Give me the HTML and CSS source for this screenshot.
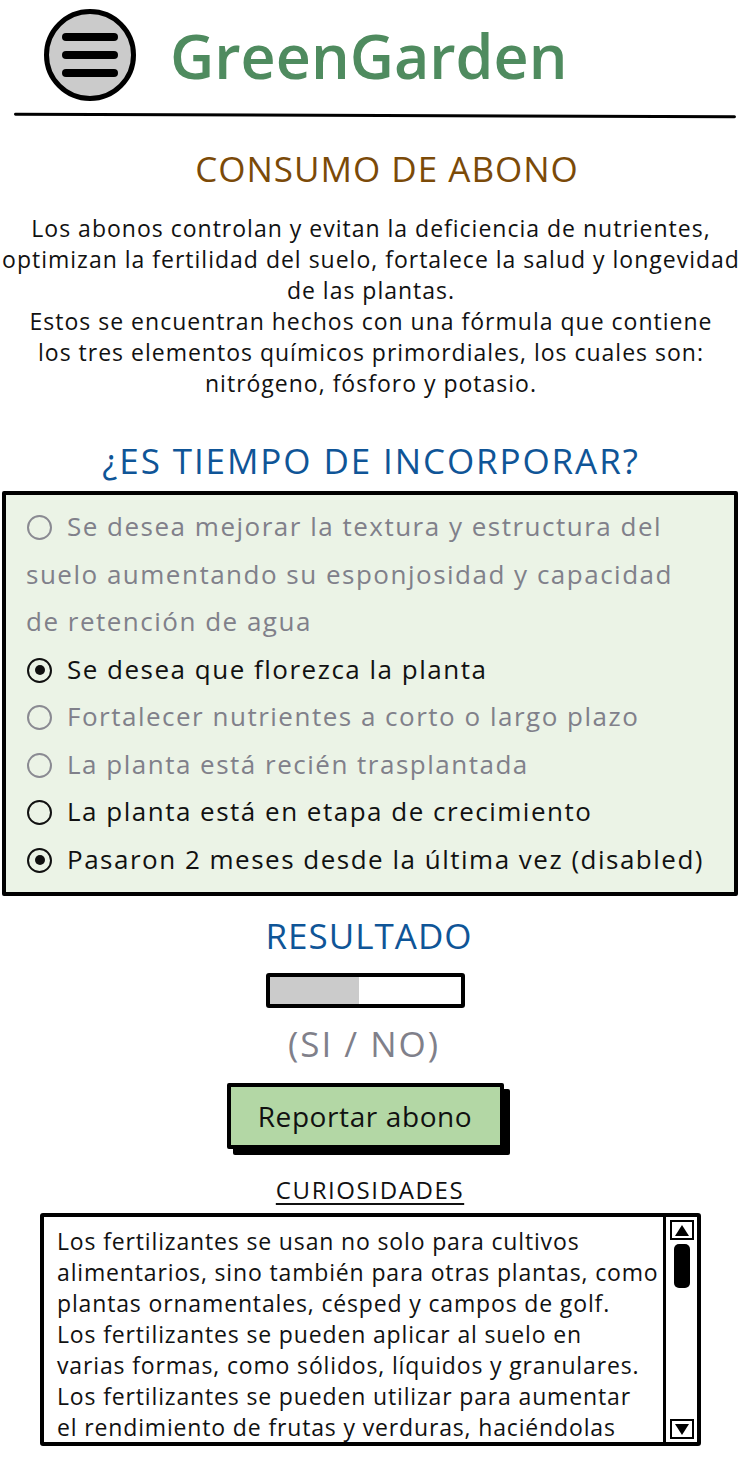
FILE: index.html
```html
<!DOCTYPE html>
<html lang="es">
<head>
<meta charset="utf-8">
<title>GreenGarden</title>
<link rel="stylesheet" href="styles.css">
</head>
<body>
<header class="header">
  <div class="menu-btn">
    <span class="bar"></span><span class="bar"></span><span class="bar"></span>
  </div>
  <h1 class="brand">GreenGarden</h1>
</header>
<div class="rule"></div>

<h2 class="title brown">CONSUMO DE ABONO</h2>
<p class="intro">Los abonos controlan y evitan la deficiencia de nutrientes,<br>optimizan la fertilidad del suelo, fortalece la salud y longevidad<br>de las plantas.<br>Estos se encuentran hechos con una fórmula que contiene<br>los tres elementos químicos primordiales, los cuales son:<br>nitrógeno, fósforo y potasio.</p>

<h2 class="title blue q">¿ES TIEMPO DE INCORPORAR?</h2>
<div class="options">
  <div class="opt disabled"><span class="radio"></span>Se desea mejorar la textura y estructura del<br>suelo aumentando su esponjosidad y capacidad<br>de retención de agua</div>
  <div class="opt"><span class="radio checked"></span>Se desea que florezca la planta</div>
  <div class="opt disabled"><span class="radio"></span>Fortalecer nutrientes a corto o largo plazo</div>
  <div class="opt disabled"><span class="radio"></span>La planta está recién trasplantada</div>
  <div class="opt"><span class="radio"></span>La planta está en etapa de crecimiento</div>
  <div class="opt"><span class="radio checked"></span>Pasaron 2 meses desde la última vez (disabled)</div>
</div>

<h2 class="title blue result">RESULTADO</h2>
<div class="progress"><div class="fill" style="width:47%"></div></div>
<div class="sino">(SI / NO)</div>
<div class="btn-wrap"><button class="btn">Reportar abono</button></div>

<div class="curio-title">CURIOSIDADES</div>
<div class="textarea">
  <div class="ta-text">Los fertilizantes se usan no solo para cultivos<br>alimentarios, sino también para otras plantas, como<br>plantas ornamentales, césped y campos de golf.<br>Los fertilizantes se pueden aplicar al suelo en<br>varias formas, como sólidos, líquidos y granulares.<br>Los fertilizantes se pueden utilizar para aumentar<br>el rendimiento de frutas y verduras, haciéndolas</div>
  <div class="scroll">
    <div class="arrow up"></div>
    <div class="track"><div class="thumb"></div></div>
    <div class="arrow down"></div>
  </div>
</div>
</body>
</html>
```
FILE: styles.css
```css
* { box-sizing: border-box; }
html, body { margin: 0; padding: 0; background: #fff; }
body {
  width: 742px;
  font-family: "Open Sans", "Noto Sans", sans-serif;
  color: #111;
}
.header {
  display: flex;
  align-items: center;
  padding: 9px 0 0 44px;
  height: 101px;
}
.menu-btn {
  width: 92px;
  height: 92px;
  border-radius: 50%;
  background: #cbcbcb;
  border: 5px solid #000;
  display: flex;
  flex-direction: column;
  justify-content: center;
  align-items: center;
  gap: 10px;
}
.bar {
  display: block;
  width: 56px;
  height: 8px;
  border-radius: 4px;
  background: #000;
}
.brand {
  margin: 0 0 0 34px;
  font-size: 61px;
  font-weight: 600;
  color: #4f8b5f;
  line-height: 1;
}
.rule {
  margin: 13px 6px 0 14px;
  height: 3px;
  background: #000;
  border-radius: 2px;
  transform: rotate(0.2deg);
}
.title {
  margin: 0;
  text-align: center;
  font-weight: 400;
  font-size: 35px;
  line-height: 40px;
}
.brown { color: #7b4a08; margin-top: 32px; letter-spacing: 1px; padding-left: 32px; }
.blue { color: #0f5597; }
.intro {
  margin: 24px 0 0;
  text-align: center;
  font-size: 23px;
  line-height: 31px;
  letter-spacing: 1px;
  white-space: nowrap;
}
.q { margin-top: 42px; letter-spacing: 1.9px; }
.options {
  margin: 10px 4px 0 2px;
  background: #ebf3e6;
  border: 4px solid #000;
  border-radius: 2px;
  padding: 8px 6px 9px 20px;
}
.opt {
  position: relative;
  font-size: 26px;
  line-height: 47.5px;
  letter-spacing: 1.5px;
  color: #111;
  text-indent: 41px;
  white-space: nowrap;
}
.opt.disabled { color: #80808a; }
.radio {
  position: absolute;
  left: 1px;
  top: 12px;
  width: 25px;
  height: 25px;
  border-radius: 50%;
  border: 2.5px solid #111;
}
.opt.disabled .radio { border-color: #8a8a92; }
.radio.checked::after {
  content: "";
  position: absolute;
  left: 50%;
  top: 50%;
  width: 10px;
  height: 10px;
  margin: -5px 0 0 -5px;
  border-radius: 50%;
  background: #111;
}
.result { margin-top: 20px; margin-left: -4px; letter-spacing: 1px; }
.progress {
  margin: 17px auto 0;
  width: 199px;
  height: 35px;
  border: 4px solid #000;
  border-radius: 3px;
  background: #fff;
  transform: translateX(-6px);
  overflow: hidden;
}
.fill { height: 100%; background: #cbcbcb; }
.sino {
  margin-top: 16px;
  text-align: center;
  font-size: 35px;
  line-height: 40px;
  letter-spacing: 2px;
  color: #80808a;
  transform: translateX(-7px);
}
.btn-wrap {
  display: flex;
  justify-content: center;
  margin-top: 19px;
  padding-right: 12px;
}
.btn {
  width: 277px;
  height: 66px;
  background: #b3d7a5;
  border: 4px solid #000;
  border-radius: 2px;
  box-shadow: 6px 6px 0 #000;
  font-family: inherit;
  font-size: 28px;
  letter-spacing: 0.6px;
  color: #111;
  padding: 0;
}
.curio-title {
  margin-top: 28px;
  text-align: center;
  font-size: 24px;
  line-height: 26px;
  letter-spacing: 1.6px;
  text-decoration: underline;
  text-decoration-thickness: 1.5px;
  text-underline-offset: 4px;
  padding-right: 2px;
}
.textarea {
  margin: 10px 0 0 40px;
  width: 661px;
  height: 233px;
  border: 4px solid #000;
  border-radius: 3px;
  display: flex;
  overflow: hidden;
}
.ta-text {
  flex: 1;
  padding: 9px 0 0 13px;
  font-size: 23px;
  line-height: 31px;
  letter-spacing: 0.85px;
  overflow: hidden;
  white-space: nowrap;
}
.scroll {
  width: 34px;
  border-left: 3px solid #000;
  display: flex;
  flex-direction: column;
  align-items: center;
  padding: 3px 3px;
}
.arrow {
  width: 24px;
  height: 20px;
  border: 2px solid #000;
  position: relative;
}
.arrow::after {
  content: "";
  position: absolute;
  left: 3px;
  border-left: 7px solid transparent;
  border-right: 7px solid transparent;
}
.arrow.up::after { top: 3px; border-bottom: 11px solid #000; }
.arrow.down::after { top: 3px; border-top: 11px solid #000; }
.track { flex: 1; width: 100%; display: flex; justify-content: center; padding-top: 4px; }
.thumb { width: 16px; height: 44px; background: #000; border-radius: 5px; }
```
